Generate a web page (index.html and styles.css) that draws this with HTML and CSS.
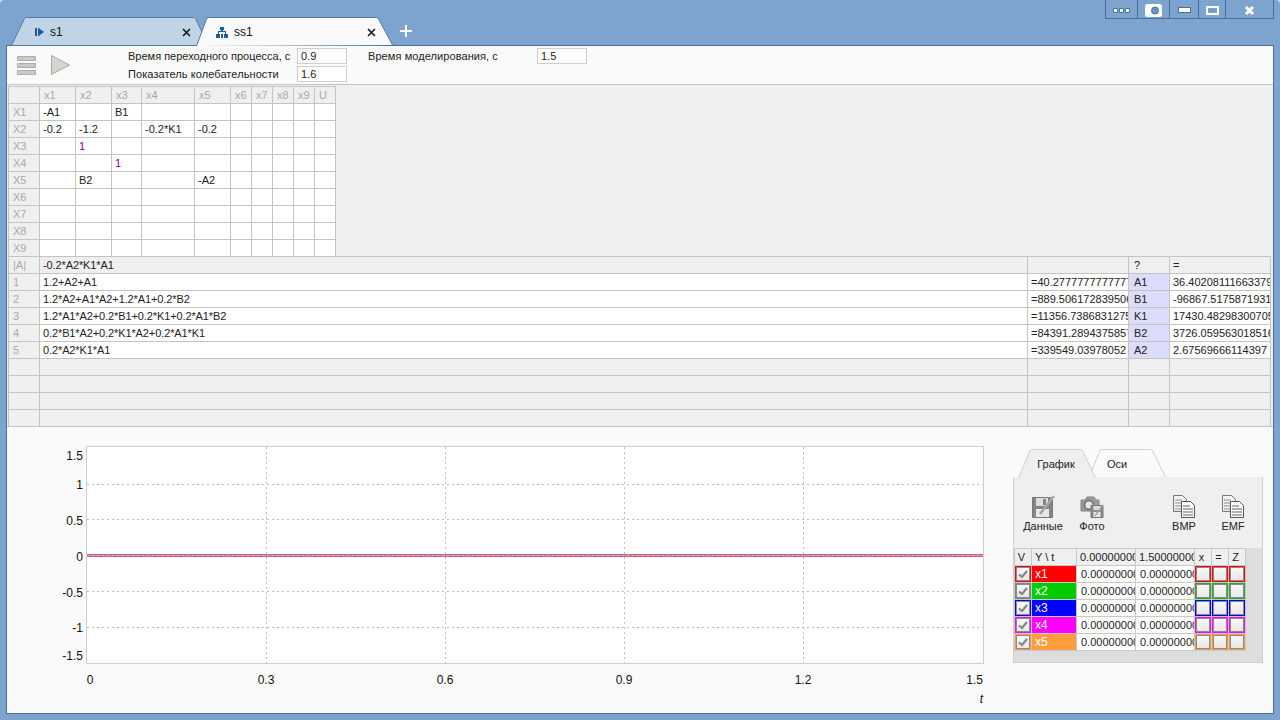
FILE: index.html
```html
<!DOCTYPE html>
<html lang="en">

<head>
    <meta charset="UTF-8">
    <title>ss1</title>
    <link rel="stylesheet" href="styles.css">
</head>

<body>
    <div class="topbar">
        <div class="tab tab-back">
            <svg class="tab-shape" width="198" height="29" viewBox="0 0 198 29"><path d="M0.500 28.500 L13.500 1.500 Q14 0.500 15.500 0.500 H182.500 Q184 0.500 184.500 1.500 L197.500 28.500 Z" fill="#c1d4e5" stroke="#4f7ba8"/></svg>
            <svg class="tab-icon" width="10" height="10" viewBox="0 0 10 10"><path d="M0 1h2v8H0z M3 0.500 L9 5 L3 9.500z" fill="#1f5c9c"/></svg>
            <span class="tab-name">s1</span>
            <svg class="tab-close" width="9" height="9" viewBox="0 0 9 9"><path d="M1 1 L8 8 M8 1 L1 8" stroke="#111" stroke-width="1.500" fill="none"/></svg>
        </div>
        <div class="tab tab-front">
            <svg class="tab-shape" width="197" height="29" viewBox="0 0 197 29"><path d="M0.500 29 L10.500 2 Q11 0.500 12.500 0.500 H180.500 Q182 0.500 182.500 2 L196.500 28" fill="#fafafa" stroke="#4f7ba8"/></svg>
            <svg class="tab-icon" width="12" height="11" viewBox="0 0 12 11"><path d="M4 0h4v3H7v1h3v3h2v4H8V7h1V5H3v2h1v4H0V7h2V4h3V3H4z M5 7h2v4H5z" fill="#1f5c9c"/></svg>
            <span class="tab-name">ss1</span>
            <svg class="tab-close" width="9" height="9" viewBox="0 0 9 9"><path d="M1 1 L8 8 M8 1 L1 8" stroke="#111" stroke-width="1.500" fill="none"/></svg>
        </div>
        <svg class="tab-add" width="12" height="12" viewBox="0 0 12 12"><path d="M5 0h2v5h5v2H7v5H5V7H0V5h5z" fill="#fff"/></svg>
        <div class="win-buttons">
            <div class="win-btn win-more"><svg width="17" height="5" viewBox="0 0 17 5"><path d="M0.500 0.500h4v4h-4z M6.500 0.500h4v4h-4z M12.500 0.500h4v4h-4z" fill="#fff" stroke="#47719c"/></svg></div>
            <div class="win-btn win-shot"><svg width="17" height="13" viewBox="0 0 17 13"><rect x="0" y="0" width="17" height="13" rx="2.500" fill="#fff"/><circle cx="10" cy="6.500" r="3.500" fill="#6f95c0" stroke="#47719c"/></svg></div>
            <div class="win-btn win-min"><svg width="13" height="6" viewBox="0 0 13 6"><rect x="0.500" y="0.500" width="12" height="5" fill="#fff" stroke="#47719c"/></svg></div>
            <div class="win-btn win-max"><svg width="13" height="9" viewBox="0 0 13 9"><rect x="1" y="1" width="11" height="7" fill="none" stroke="#fff" stroke-width="2"/><rect x="3.500" y="3.500" width="6" height="2" fill="#6f95c0"/></svg></div>
            <div class="win-btn win-close"><svg width="11" height="11" viewBox="0 0 11 11"><path d="M2 2 L9 9 M9 2 L2 9" stroke="#fff" stroke-width="3" fill="none"/></svg></div>
        </div>
    </div>

    <div class="main">
        <div class="toolbar">
            <svg class="menu-icon" width="19" height="19" viewBox="0 0 19 19"><path d="M0.500 0.500h18v4h-18z M0.500 7.500h18v4h-18z M0.500 14.500h18v4h-18z" fill="#c9c9c9" stroke="#aeaeae"/></svg>
            <svg class="play-icon" width="19" height="20" viewBox="0 0 19 20"><path d="M0.500 0.500 L18.500 10 L0.500 19.500z" fill="#d6d6d0" stroke="#a8a8a2"/></svg>
            <div class="params">
                <label>Время переходного процесса, с</label><div class="field">0.9</div>
                <label class="wide">Показатель колебательности</label><div class="field">1.6</div>
            </div>
            <div class="params params-sim">
                <label class="wide">Время моделирования, с</label><div class="field">1.5</div>
            </div>
        </div>

        <div class="tables">
            <table class="grid matrix">
                <colgroup>
                    <col class="c31"><col class="c36"><col class="c36"><col class="c30"><col class="c53"><col class="c36"><col class="c21"><col class="c21"><col class="c21"><col class="c21"><col class="c21">
                </colgroup>
                <tr class="head"><th></th><th>x1</th><th>x2</th><th>x3</th><th>x4</th><th>x5</th><th>x6</th><th>x7</th><th>x8</th><th>x9</th><th>U</th></tr>
                <tr><th>X1</th><td>-A1</td><td></td><td>B1</td><td></td><td></td><td></td><td></td><td></td><td></td><td></td></tr>
                <tr><th>X2</th><td>-0.2</td><td>-1.2</td><td></td><td>-0.2*K1</td><td>-0.2</td><td></td><td></td><td></td><td></td><td></td></tr>
                <tr><th>X3</th><td></td><td class="one">1</td><td></td><td></td><td></td><td></td><td></td><td></td><td></td><td></td></tr>
                <tr><th>X4</th><td></td><td></td><td class="one">1</td><td></td><td></td><td></td><td></td><td></td><td></td><td></td></tr>
                <tr><th>X5</th><td></td><td>B2</td><td></td><td></td><td>-A2</td><td></td><td></td><td></td><td></td><td></td></tr>
                <tr><th>X6</th><td></td><td></td><td></td><td></td><td></td><td></td><td></td><td></td><td></td><td></td></tr>
                <tr><th>X7</th><td></td><td></td><td></td><td></td><td></td><td></td><td></td><td></td><td></td><td></td></tr>
                <tr><th>X8</th><td></td><td></td><td></td><td></td><td></td><td></td><td></td><td></td><td></td><td></td></tr>
                <tr><th>X9</th><td></td><td></td><td></td><td></td><td></td><td></td><td></td><td></td><td></td><td></td></tr>
            </table>

            <table class="grid coeffs">
                <colgroup>
                    <col class="c31"><col><col class="c101"><col class="c41"><col class="c101">
                </colgroup>
                <tr class="det"><th>|A|</th><td class="expr">-0.2*A2*K1*A1</td><td></td><td class="var-head">?</td><td class="val">=</td></tr>
                <tr><th>1</th><td class="expr">1.2+A2+A1</td><td>=40.27777777777778</td><td class="var">A1</td><td class="val">36.40208111663379</td></tr>
                <tr><th>2</th><td class="expr">1.2*A2+A1*A2+1.2*A1+0.2*B2</td><td>=889.5061728395062</td><td class="var">B1</td><td class="val">-96867.51758719311</td></tr>
                <tr><th>3</th><td class="expr">1.2*A1*A2+0.2*B1+0.2*K1+0.2*A1*B2</td><td>=11356.73868312757</td><td class="var">K1</td><td class="val">17430.48298300705</td></tr>
                <tr><th>4</th><td class="expr">0.2*B1*A2+0.2*K1*A2+0.2*A1*K1</td><td>=84391.28943758573</td><td class="var">B2</td><td class="val">3726.059563018516</td></tr>
                <tr><th>5</th><td class="expr">0.2*A2*K1*A1</td><td>=339549.03978052</td><td class="var">A2</td><td class="val">2.67569666114397</td></tr>
                <tr class="blank"><th></th><td></td><td></td><td></td><td></td></tr>
                <tr class="blank"><th></th><td></td><td></td><td></td><td></td></tr>
                <tr class="blank"><th></th><td></td><td></td><td></td><td></td></tr>
                <tr class="blank"><th></th><td></td><td></td><td></td><td></td></tr>
            </table>
        </div>

        <div class="bottom">
            <svg class="chart" width="1000" height="286" viewBox="0 0 1000 286">
                <rect x="79.500" y="19.500" width="897" height="217" fill="#fff" stroke="#cfcfcf"/>
                <g stroke="#bdbdbd" stroke-dasharray="2 3" fill="none">
                    <path d="M80 57.500H976 M80 92.500H976 M80 164.500H976 M80 200.500H976"/>
                    <path d="M259.500 20V236 M438.500 20V236 M617.500 20V236 M796.500 20V236"/>
                </g>
                <rect x="80" y="127" width="896" height="3" fill="#cc5f96"/>
                <rect x="80" y="128" width="896" height="1" fill="#f0894f"/>
                <path d="M80 128.500H976" stroke="#c8bcc8" stroke-dasharray="2 3"/>
                <g class="axis" text-anchor="end">
                    <text x="76" y="33">1.5</text>
                    <text x="76" y="62">1</text>
                    <text x="76" y="98">0.5</text>
                    <text x="76" y="134">0</text>
                    <text x="76" y="170">-0.5</text>
                    <text x="76" y="205">-1</text>
                    <text x="76" y="233">-1.5</text>
                </g>
                <g class="axis" text-anchor="middle">
                    <text x="83" y="257">0</text>
                    <text x="259" y="257">0.3</text>
                    <text x="438" y="257">0.6</text>
                    <text x="617" y="257">0.9</text>
                    <text x="796" y="257">1.2</text>
                    <text x="976" y="257" text-anchor="end">1.5</text>
                    <text x="976" y="276" text-anchor="end" class="axis-name">t</text>
                </g>
            </svg>

            <div class="side">
                <div class="side-tabs">
                    <div class="side-tab side-tab-on">
                        <svg class="side-tab-shape" width="78" height="29" viewBox="0 0 78 29"><path d="M0.500 29 L12 1.500 Q12.500 0.500 14 0.500 H63 Q64 0.500 64.500 1.500 L77.500 29" fill="#efefef" stroke="#cfcfcf"/></svg>
                        <span>График</span>
                    </div>
                    <div class="side-tab side-tab-off">
                        <svg class="side-tab-shape" width="74" height="29" viewBox="0 0 74 29"><path d="M0 21 L8 1.500 Q8.500 0.500 10 0.500 H59 Q60 0.500 60.500 1.500 L73.500 28" fill="#fafafa" stroke="#cfcfcf"/></svg>
                        <span>Оси</span>
                    </div>
                </div>
                <div class="side-panel">
                    <div class="side-tools">
                        <div class="tool tool-data">
                            <svg width="23" height="23" viewBox="0 0 23 23"><path d="M0.500 2.500h18l2 2v18h-20z" fill="#858585" stroke="#777"/><rect x="4" y="3" width="12" height="8" fill="#dcdcdc"/><rect x="11" y="4" width="3" height="6" fill="#858585"/><rect x="4" y="14" width="13" height="8" fill="#e8e8e8"/><path d="M8 19 L22 1" stroke="#a4a4a4" stroke-width="2.500"/></svg>
                            <span>Данные</span>
                        </div>
                        <div class="tool tool-photo">
                            <svg width="24" height="23" viewBox="0 0 24 23"><path d="M1 5h4l2-3h7l2 3h3v11H1z" fill="#9a9a9a" stroke="#858585"/><circle cx="9" cy="10" r="4.500" fill="#e4e4e4" stroke="#7c7c7c" stroke-width="2"/><path d="M11 10.500h12v12H11z" fill="#8c8c8c" stroke="#777"/><rect x="13.500" y="11" width="7" height="4" fill="#dcdcdc"/><rect x="13.500" y="17" width="7" height="5" fill="#e8e8e8"/><path d="M15 21 L23 10" stroke="#a4a4a4" stroke-width="1.500"/></svg>
                            <span>Фото</span>
                        </div>
                        <div class="tool tool-bmp">
                            <svg width="22" height="23" viewBox="0 0 22 23"><path d="M0.500 0.500h9l4 4v12h-13z" fill="#f2f2f2" stroke="#777"/><path d="M2 5h7 M2 8h9 M2 11h9 M2 14h9" stroke="#8a8a8a"/><path d="M8.500 6.500h9l4 4v12h-13z" fill="#fafafa" stroke="#555"/><path d="M10 11h7 M10 14h10 M10 17h10 M10 20h10" stroke="#666"/></svg>
                            <span>BMP</span>
                        </div>
                        <div class="tool tool-emf">
                            <svg width="22" height="23" viewBox="0 0 22 23"><path d="M0.500 0.500h9l4 4v12h-13z" fill="#f2f2f2" stroke="#777"/><path d="M2 5h7 M2 8h9 M2 11h9 M2 14h9" stroke="#8a8a8a"/><path d="M8.500 6.500h9l4 4v12h-13z" fill="#fafafa" stroke="#555"/><path d="M10 11h7 M10 14h10 M10 17h10 M10 20h10" stroke="#666"/></svg>
                            <span>EMF</span>
                        </div>
                    </div>
                    <table class="series">
                        <colgroup>
                            <col class="s17"><col class="s45"><col class="s59"><col class="s59"><col class="s17"><col class="s17"><col class="s17">
                        </colgroup>
                        <tr class="series-head"><th>V</th><th class="left">Y \ t</th><th class="left">0.00000000</th><th class="left">1.50000000</th><th>x</th><th>=</th><th>Z</th></tr>
                        <tr class="line-x1">
                            <td><div class="box"><svg width="10" height="9" viewBox="0 0 10 9"><path d="M1 4.500 L4 7 L9 1" stroke="#858585" stroke-width="2.200" fill="none"/></svg></div></td>
                            <td class="name">x1</td><td class="num">0.00000000</td><td class="num">0.00000000</td>
                            <td><div class="box"></div></td><td><div class="box"></div></td><td><div class="box"></div></td>
                        </tr>
                        <tr class="line-x2">
                            <td><div class="box box-v"><svg width="10" height="9" viewBox="0 0 10 9"><path d="M1 4.500 L4 7 L9 1" stroke="#858585" stroke-width="2.200" fill="none"/></svg></div></td>
                            <td class="name">x2</td><td class="num">0.00000000</td><td class="num">0.00000000</td>
                            <td><div class="box"></div></td><td><div class="box"></div></td><td><div class="box"></div></td>
                        </tr>
                        <tr class="line-x3">
                            <td><div class="box"><svg width="10" height="9" viewBox="0 0 10 9"><path d="M1 4.500 L4 7 L9 1" stroke="#858585" stroke-width="2.200" fill="none"/></svg></div></td>
                            <td class="name">x3</td><td class="num">0.00000000</td><td class="num">0.00000000</td>
                            <td><div class="box"></div></td><td><div class="box"></div></td><td><div class="box"></div></td>
                        </tr>
                        <tr class="line-x4">
                            <td><div class="box"><svg width="10" height="9" viewBox="0 0 10 9"><path d="M1 4.500 L4 7 L9 1" stroke="#858585" stroke-width="2.200" fill="none"/></svg></div></td>
                            <td class="name">x4</td><td class="num">0.00000000</td><td class="num">0.00000000</td>
                            <td><div class="box"></div></td><td><div class="box"></div></td><td><div class="box"></div></td>
                        </tr>
                        <tr class="line-x5">
                            <td><div class="box"><svg width="10" height="9" viewBox="0 0 10 9"><path d="M1 4.500 L4 7 L9 1" stroke="#858585" stroke-width="2.200" fill="none"/></svg></div></td>
                            <td class="name">x5</td><td class="num">0.00000000</td><td class="num">0.00000000</td>
                            <td><div class="box"></div></td><td><div class="box"></div></td><td><div class="box"></div></td>
                        </tr>
                    </table>
                </div>
            </div>
        </div>
    </div>
</body>

</html>
```

FILE: styles.css
```css
html {
    margin: 0;
    height: 100%;
    background-color: #dfe6ee;
}

body {
    margin: 0;
    width: 1280px;
    height: 720px;
    box-sizing: border-box;
    padding: 0 6px 6px;
    overflow: hidden;
    display: flex;
    flex-direction: column;
    border-radius: 4px 4px 0 0;
    background-color: #7da3cf;
    font-family: "Liberation Sans", Arial, sans-serif;
    font-size: 11px;
    color: #222;
}

/* tabs and window buttons */
.topbar {
    position: relative;
    z-index: 1;
    height: 45px;
    flex: none;
    display: flex;
    align-items: flex-end;
    padding-left: 5px;
}

.tab {
    position: relative;
    height: 28px;
    padding-top: 2px;
    box-sizing: border-box;
    display: flex;
    align-items: center;
    font-size: 12px;
    color: #111;
}

.tab-shape {
    position: absolute;
    left: 0;
    top: 0;
}

.tab > *:not(.tab-shape) {
    position: relative;
}

.tab-back {
    width: 185px;
    padding-left: 24px;
}

.tab-front {
    width: 197px;
    padding-left: 20px;
}

.tab-name {
    margin-left: 5px;
}

.tab-front .tab-name {
    margin-left: 6px;
}

.tab-back .tab-close {
    margin-left: 119px;
}

.tab-front .tab-close {
    margin-left: 114px;
}

.tab-add {
    margin: 0 0 8px 7px;
}

.win-buttons {
    align-self: flex-start;
    margin-left: auto;
    width: 169px;
    height: 19px;
    display: flex;
    box-sizing: border-box;
    border-left: 1px solid #47719c;
    border-right: 1px solid #47719c;
    border-bottom: 1px solid #47719c;
}

.win-btn {
    display: flex;
    align-items: center;
    justify-content: center;
    height: 18px;
    padding-top: 2px;
    border-right: 1px solid #47719c;
    box-sizing: border-box;
}

.win-more { width: 32px; }
.win-shot { width: 32px; }
.win-min { width: 29px; }
.win-max { width: 27px; }
.win-close { width: 47px; border-right: none; }

/* main panel */
.main {
    flex: 1;
    min-height: 0;
    display: flex;
    flex-direction: column;
    border: 1px solid #47719c;
    background-color: #fafafa;
}

.toolbar {
    height: 38px;
    flex: none;
    display: flex;
    align-items: center;
    border-bottom: 1px solid #c4c4c4;
    background-color: #fafafa;
}

.menu-icon {
    margin-left: 10px;
}

.play-icon {
    margin-left: 15px;
}

.params {
    display: grid;
    grid-template-columns: 169px 50px;
    grid-auto-rows: 16px;
    row-gap: 2px;
    align-items: center;
    margin-left: 58px;
}

.params-sim {
    align-self: flex-start;
    margin-top: 2px;
    margin-left: 21px;
}

.params label {
    white-space: nowrap;
}

.params .wide {
    letter-spacing: 0.08px;
}

.field {
    height: 16px;
    line-height: 15px;
    box-sizing: border-box;
    padding-left: 3px;
    border: 1px solid #cfcfcf;
    background-color: #fff;
}

.tables {
    height: 342px;
    flex: none;
    background-color: #efefef;
    border-bottom: 1px solid #c4c4c4;
    box-sizing: border-box;
}

.grid {
    table-layout: fixed;
    border-collapse: collapse;
    font-size: 11px;
}

.grid th, .grid td {
    height: 16px;
    padding: 0 3px;
    border: 1px solid #c4c4c4;
    text-align: left;
    font-weight: normal;
    white-space: nowrap;
    overflow: hidden;
    background-color: #fff;
}

.grid th {
    color: #a9a9a9;
    background-color: #efefef;
    padding-left: 4px;
}

.matrix {
    width: 327px;
    margin: 1px 0 0 1px;
}

.c21 { width: 21px; }
.c30 { width: 30px; }
.c31 { width: 31px; }
.c36 { width: 36px; }
.c41 { width: 41px; }
.c53 { width: 53px; }
.c101 { width: 101px; }

.one {
    color: #800080;
}

.coeffs {
    width: 1263px;
    margin: -1px 0 0 1px;
}

.grid .expr {
    letter-spacing: -0.11px;
}

.coeffs .det td, .coeffs .blank td {
    background-color: #efefef;
}

.grid .var-head {
    padding-left: 5px;
}

.grid .var {
    padding-left: 5px;
    background-color: #dcdcfc;
}

.grid .val {
    padding-left: 3px;
    padding-right: 0;
}

/* chart and side panel */
.bottom {
    flex: 1;
    display: flex;
    min-height: 0;
    background-color: #fafafa;
}

.chart {
    flex: none;
    display: block;
}

.axis {
    font-size: 12px;
    fill: #111;
}

.axis-name {
    font-style: italic;
}

.side {
    margin: 22px 0 0 6px;
    width: 250px;
}

.side-tabs {
    display: flex;
    height: 29px;
    padding-left: 5px;
}

.side-tab {
    position: relative;
    height: 29px;
    text-align: center;
    line-height: 30px;
    font-size: 11px;
}

.side-tab span {
    position: relative;
}

.side-tab-shape {
    position: absolute;
    left: 0;
    top: 0;
}

.side-tab-on {
    width: 74px;
    z-index: 1;
}

.side-tab-on span {
    left: 1px;
}

.side-tab-off {
    width: 74px;
}

.side-tab-off span {
    left: -12px;
}

.side-panel {
    position: relative;
    margin-top: -1px;
    height: 186px;
    box-sizing: border-box;
    border: 1px solid #cfcfcf;
    border-top: none;
    background-color: #ddd;
    display: flex;
    flex-direction: column;
}

.side-tools {
    height: 71px;
    flex: none;
    display: flex;
    align-items: flex-start;
    background-color: #efefef;
    padding-top: 18px;
    box-sizing: border-box;
}

.tool {
    display: flex;
    flex-direction: column;
    align-items: center;
    gap: 2px;
    width: 44px;
    font-size: 11px;
}

.tool-data { margin-left: 7px; }
.tool-photo { margin-left: 5px; }
.tool-bmp { margin-left: 48px; }
.tool-emf { margin-left: 5px; }

.series {
    table-layout: fixed;
    border-collapse: collapse;
    width: 231px;
    font-size: 11px;
}

.series th, .series td {
    height: 16px;
    padding: 0;
    border: 1px solid #c8c8c8;
    overflow: hidden;
    white-space: nowrap;
}

.series th {
    font-weight: normal;
    text-align: center;
    padding-right: 3px;
    background-color: #efefef;
}

.series th.left {
    text-align: left;
    padding-left: 3px;
    padding-right: 0;
}

.s17 { width: 17px; }
.s45 { width: 45px; }
.s59 { width: 59px; }

.series .num {
    background-color: #fff;
    text-align: left;
    padding-left: 4px;
}

.series .name {
    color: #fff;
    padding-left: 3px;
    font-size: 12px;
}

.box {
    display: flex;
    align-items: center;
    justify-content: center;
    height: 16px;
    box-sizing: border-box;
    border: 1px solid var(--line);
    box-shadow: inset 0 0 0 1px #8a8a8a;
    background: linear-gradient(#fafafa, #e6e6e6);
}

.box-v {
    border-color: #6f8f6f;
}

.line-x1 { --line: #ff0000; }
.line-x2 { --line: #22aa22; }
.line-x3 { --line: #0000ff; }
.line-x4 { --line: #ff00ff; }
.line-x5 { --line: #ff9c40; }

.line-x1 .name { background-color: #ff0000; }
.line-x2 .name { background-color: #00cc00; }
.line-x3 .name { background-color: #0000ff; }
.line-x4 .name { background-color: #ff00ff; }
.line-x5 .name { background-color: #ff9c40; }
```
